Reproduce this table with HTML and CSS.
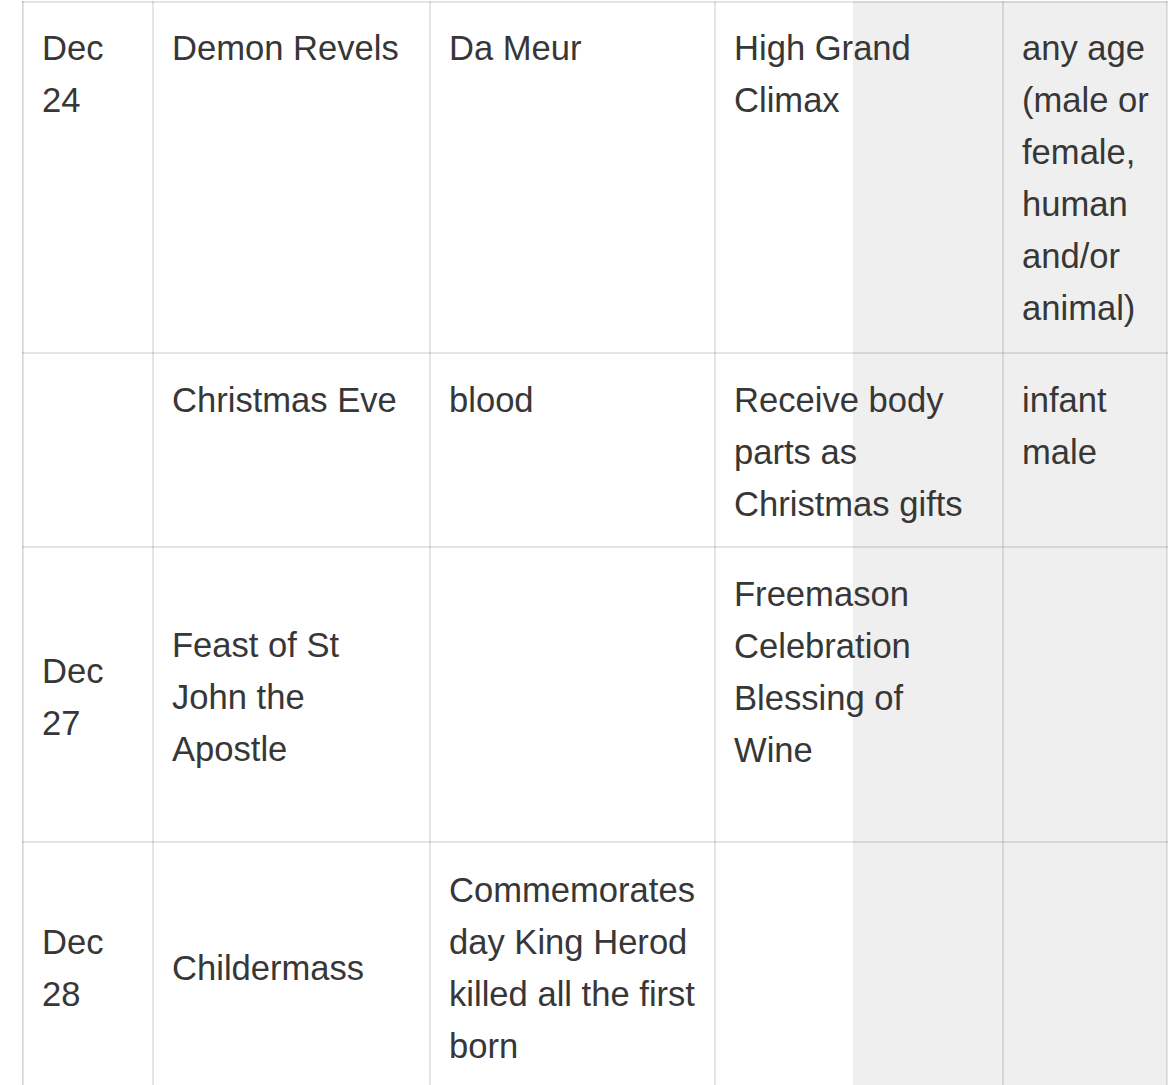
FILE: index.html
```html
<!DOCTYPE html>
<html>
<head>
<meta charset="utf-8">
<link rel="stylesheet" href="styles.css">
</head>
<body>
<table class="cal">
  <colgroup>
    <col class="c1"><col class="c2"><col class="c3"><col class="c4"><col class="c5">
  </colgroup>
  <tr class="top r1">
    <td>Dec<br>24</td>
    <td>Demon Revels</td>
    <td>Da Meur</td>
    <td>High Grand<br>Climax</td>
    <td>any age<br>(male or<br>female,<br>human<br>and/or<br>animal)</td>
  </tr>
  <tr class="top r2">
    <td></td>
    <td>Christmas Eve</td>
    <td>blood</td>
    <td>Receive body<br>parts as<br>Christmas gifts</td>
    <td>infant<br>male</td>
  </tr>
  <tr class="mid r3">
    <td>Dec<br>27</td>
    <td>Feast of St<br>John the<br>Apostle</td>
    <td></td>
    <td class="filled">Freemason<br>Celebration<br>Blessing of<br>Wine</td>
    <td></td>
  </tr>
  <tr class="mid r4">
    <td>Dec<br>28</td>
    <td>Childermass</td>
    <td>Commemorates<br>day King Herod<br>killed all the first<br>born</td>
    <td></td>
    <td></td>
  </tr>
</table>
</body>
</html>
```

FILE: styles.css
```css
html, body {
  margin: 0;
  padding: 0;
  background: #ffffff;
}
body {
  font-family: "Liberation Sans", Arial, Helvetica, sans-serif;
  color: #373737;
  overflow: hidden;
}
.cal {
  margin: 1px 0 0 22px;
  width: 1146px;
  table-layout: fixed;
  border-collapse: collapse;
  background: linear-gradient(to right, #ffffff 830px, #efefef 830px);
}
.c1 { width: 130px; }
.c2 { width: 277px; }
.c3 { width: 285px; }
.c4 { width: 288px; }
.c5 { width: 164px; }
.cal td {
  border: 2px solid rgba(0, 0, 0, 0.1);
  padding: 19px 10px 17px 18px;
  font-size: 34.6px;
  line-height: 52px;
  white-space: nowrap;
  overflow: visible;
}
.top td { vertical-align: top; }
.mid td { vertical-align: middle; padding-top: 18px; padding-bottom: 18px; }
.r1 { height: 351px; }
.r2 td { padding-top: 20px; padding-bottom: 16px; }
.r3 { height: 295px; }
.r3 td { padding-top: 22px; padding-bottom: 18px; }
.r3 td.filled { vertical-align: top; padding-top: 20px; padding-bottom: 0; }
.r4 td { padding-top: 21px; padding-bottom: 18px; }
```
